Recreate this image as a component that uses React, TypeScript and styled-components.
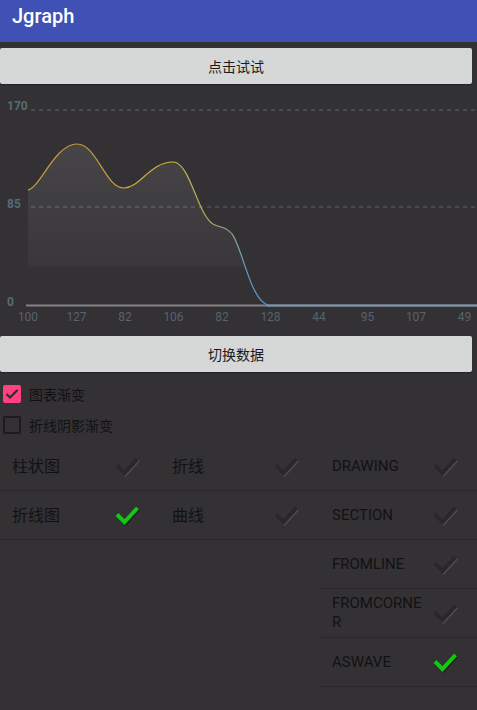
import React from "react";
import styled, { createGlobalStyle } from "styled-components";

const Global = createGlobalStyle`
  html, body { margin: 0; padding: 0; background: #333134; }
  body {
    font-family: Roboto, "Noto Sans CJK SC", sans-serif;
    width: 477px;
    height: 710px;
    overflow: hidden;
  }
  * { box-sizing: border-box; }
`;

const Page = styled.div`
  width: 477px;
  min-height: 710px;
  background: #333134;
  display: flex;
  flex-direction: column;
`;

const AppBar = styled.header`
  height: 42px;
  background: #3f51b5;
  padding: 4px 12px 0;
  color: #ffffff;
  font: 500 20px/24px Roboto, sans-serif;
`;

const ActionButton = styled.button<{ $top: number }>`
  width: 472px;
  height: 36px;
  margin: ${(p) => p.$top}px 0 0 0;
  border: none;
  border-radius: 2px;
  background: #d6d7d7;
  color: #1b1b1b;
  font: 14px/20px "Noto Sans CJK SC", sans-serif;
  padding: 0;
  box-shadow: 0 1px 1px rgba(0, 0, 0, 0.35);
  display: flex;
  align-items: center;
  justify-content: center;
`;

const ChartSvg = styled.svg`
  display: block;
  width: 477px;
  height: 252px;
`;

const Options = styled.div`
  display: flex;
  flex-direction: column;
  padding-top: 6px;
`;

const OptionRow = styled.label`
  height: 31px;
  display: flex;
  align-items: center;
  padding-left: 3px;
  gap: 8px;
  color: #121212;
  font: 14px/20px "Noto Sans CJK SC", sans-serif;
`;

const Box = styled.span<{ $on: boolean }>`
  width: 18px;
  height: 18px;
  border-radius: 2px;
  display: flex;
  align-items: center;
  justify-content: center;
  background: ${(p) => (p.$on ? "#ff4081" : "transparent")};
  border: ${(p) => (p.$on ? "none" : "2px solid #1c1b1d")};
`;

const Grid = styled.div`
  display: grid;
  grid-template-columns: repeat(3, 159px);
  align-items: start;
  margin-top: 2px;
`;

const Column = styled.div<{ $pad: number }>`
  display: flex;
  flex-direction: column;
  & > div {
    padding-left: ${(p) => p.$pad}px;
  }
`;

const Cell = styled.div`
  height: 49px;
  border-bottom: 1px solid #29272a;
  display: flex;
  align-items: center;
  padding-right: 19px;
`;

const CellLabel = styled.span<{ $cjk?: boolean }>`
  flex: 1;
  min-width: 0;
  margin-right: 6px;
  color: #121212;
  font-family: Roboto, "Noto Sans CJK SC", sans-serif;
  font-size: ${(p) => (p.$cjk ? 16 : 15)}px;
  line-height: 19px;
  word-break: break-all;
`;

const TickSvg = styled.svg`
  flex: none;
  display: block;
`;

const Tick = ({ on }: { on: boolean }) => (
  <TickSvg width="26" height="22" viewBox="0 0 26 22">
    <path
      d="M3 10.5 L10.5 18 L23.5 4"
      transform="translate(1,1)"
      stroke={on ? "#1d1d1d" : "#4f4d51"}
      strokeWidth="4"
      fill="none"
    />
    <path
      d="M3 10.5 L10.5 18 L23.5 4"
      stroke={on ? "#13c713" : "#29272a"}
      strokeWidth="4"
      fill="none"
    />
  </TickSvg>
);

const xLabels = ["100", "127", "82", "106", "82", "128", "44", "95", "107", "49"];

const curve =
  "M28 190 C40 188 55 144 77 144 C97 144 105 188 124 188 C140 188 150 162 173 162 " +
  "C190 162 197 214 213 224 C220 228 226 226 232 234 C242 246 250 300 268 305";

const Chart = () => (
  <ChartSvg viewBox="0 84 477 252">
    <defs>
      <linearGradient id="fillG" gradientUnits="userSpaceOnUse" x1="0" y1="144" x2="0" y2="268">
        <stop offset="0" stopColor="#ffffff" stopOpacity="0.095" />
        <stop offset="0.98" stopColor="#ffffff" stopOpacity="0.03" />
        <stop offset="1" stopColor="#ffffff" stopOpacity="0" />
      </linearGradient>
      <linearGradient id="lineG" gradientUnits="userSpaceOnUse" x1="28" y1="0" x2="268" y2="0">
        <stop offset="0" stopColor="#c4a03e" />
        <stop offset="0.25" stopColor="#c4963e" />
        <stop offset="0.6" stopColor="#cbb840" />
        <stop offset="0.8" stopColor="#a2aa68" />
        <stop offset="0.9" stopColor="#6c9fb8" />
        <stop offset="1" stopColor="#4f8fd2" />
      </linearGradient>
    </defs>
    <g fontFamily="Roboto, sans-serif">
      <text x="7" y="106" fontSize="12" fontWeight="700" fill="#566b76" dominantBaseline="central">170</text>
      <text x="7" y="204" fontSize="12" fontWeight="700" fill="#566b76" dominantBaseline="central">85</text>
      <text x="7" y="302" fontSize="12" fontWeight="700" fill="#566b76" dominantBaseline="central">0</text>
    </g>
    <line x1="31" y1="110" x2="477" y2="110" stroke="#4a585f" strokeWidth="1.3" strokeDasharray="4 4" />
    <line x1="31" y1="207" x2="477" y2="207" stroke="#4a585f" strokeWidth="1.3" strokeDasharray="4 4" />
    <path d={curve + " L268 305 L28 305 Z"} fill="url(#fillG)" />
    <line x1="26" y1="305.5" x2="477" y2="305.5" stroke="#858485" strokeWidth="2" />
    <path d={curve} fill="none" stroke="url(#lineG)" strokeWidth="1.2" />
    <line x1="267" y1="305.5" x2="477" y2="305.5" stroke="#7896b0" strokeWidth="2" />
    <g fontFamily="Roboto, sans-serif" fontSize="12" fill="#56646e" textAnchor="middle">
      {xLabels.map((l, i) => (
        <text key={i} x={28 + i * 48.5} y="317" dominantBaseline="central">
          {l}
        </text>
      ))}
    </g>
  </ChartSvg>
);

const columns: { pad: number; items: { label: string; on: boolean; cjk?: boolean }[] }[] = [
  {
    pad: 12,
    items: [
      { label: "柱状图", on: false, cjk: true },
      { label: "折线图", on: true, cjk: true },
    ],
  },
  {
    pad: 13,
    items: [
      { label: "折线", on: false, cjk: true },
      { label: "曲线", on: false, cjk: true },
    ],
  },
  {
    pad: 14,
    items: [
      { label: "DRAWING", on: false },
      { label: "SECTION", on: false },
      { label: "FROMLINE", on: false },
      { label: "FROMCORNER", on: false },
      { label: "ASWAVE", on: true },
    ],
  },
];

export default function App() {
  return (
    <>
      <Global />
      <Page>
        <AppBar>Jgraph</AppBar>
        <ActionButton $top={6}>点击试试</ActionButton>
        <Chart />
        <ActionButton $top={0}>切换数据</ActionButton>
        <Options>
          <OptionRow>
            <Box $on={true}>
              <svg width="14" height="12" viewBox="0 0 14 12">
                <path d="M1.5 6 L5 9.5 L12.5 2" stroke="#2e2c2f" strokeWidth="2.2" fill="none" />
              </svg>
            </Box>
            图表渐变
          </OptionRow>
          <OptionRow>
            <Box $on={false} />
            折线阴影渐变
          </OptionRow>
        </Options>
        <Grid>
          {columns.map((c, ci) => (
            <Column key={ci} $pad={c.pad}>
              {c.items.map((it) => (
                <Cell key={it.label}>
                  <CellLabel $cjk={it.cjk}>{it.label}</CellLabel>
                  <Tick on={it.on} />
                </Cell>
              ))}
            </Column>
          ))}
        </Grid>
      </Page>
    </>
  );
}
